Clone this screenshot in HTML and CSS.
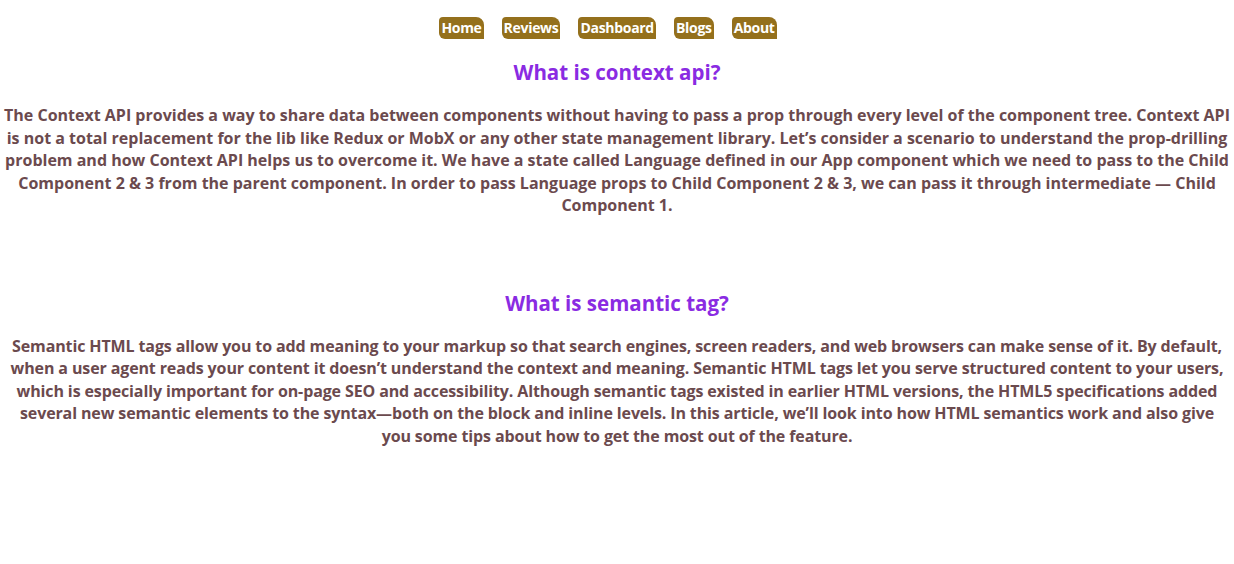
FILE: index.html
```html
<!DOCTYPE html>
<html>
<head>
<meta charset="utf-8">
<link rel="stylesheet" href="styles.css">
</head>
<body>
<nav class="nav">
  <a class="nav-link" href="#">Home</a>
  <a class="nav-link" href="#">Reviews</a>
  <a class="nav-link" href="#">Dashboard</a>
  <a class="nav-link" href="#">Blogs</a>
  <a class="nav-link" href="#">About</a>
</nav>
<section class="qa">
  <h2 class="question">What is context api?</h2>
  <p class="answer">The Context API provides a way to share data between components without having to pass a prop through every level of the component tree. Context API is not a total replacement for the lib like Redux or MobX or any other state management library. Let’s consider a scenario to understand the prop-drilling problem and how Context API helps us to overcome it. We have a state called Language defined in our App component which we need to pass to the Child Component 2 &amp; 3 from the parent component. In order to pass Language props to Child Component 2 &amp; 3, we can pass it through intermediate — Child Component 1.</p>
</section>
<section class="qa qa-second">
  <h2 class="question">What is semantic tag?</h2>
  <p class="answer answer-tight">Semantic HTML tags allow you to add meaning to your markup so that search engines, screen readers, and web browsers can make sense of it. By default, when a user agent reads your content it doesn’t understand the context and meaning. Semantic HTML tags let you serve structured content to your users, which is especially important for on-page SEO and accessibility. Although semantic tags existed in earlier HTML versions, the HTML5 specifications added several new semantic elements to the syntax—both on the block and inline levels. In this article, we’ll look into how HTML semantics work and also give you some tips about how to get the most out of the feature.</p>
</section>
</body>
</html>
```

FILE: styles.css
```css
html, body {
  margin: 0;
  padding: 0;
  background: #ffffff;
}
body {
  font-family: "Open Sans", "Noto Sans", sans-serif;
  padding: 0 4px;
}
.nav {
  display: flex;
  justify-content: center;
  gap: 18px;
  padding-top: 17px;
  padding-right: 18px;
}
.nav-link {
  display: block;
  background: #94701c;
  color: #ffffff;
  font-weight: 700;
  font-size: 14px;
  line-height: 22px;
  height: 22px;
  padding: 0 2px;
  text-decoration: none;
  border-radius: 4px 8px 0 6px;
  letter-spacing: -0.3px;
}
.qa {
  text-align: center;
}
.question {
  margin: 19px 0 0;
  color: #8a2be2;
  font-size: 20.5px;
  line-height: 28px;
  font-weight: 700;
}
.answer {
  margin: 18px 0 0;
  color: #6b4a4e;
  font-size: 16px;
  line-height: 22.5px;
  font-weight: 700;
}
.answer-tight {
  margin-top: 18px;
  letter-spacing: -0.12px;
}
.qa-second {
  margin-top: 72px;
}
.qa-second .question {
  margin-top: 0;
}
```
